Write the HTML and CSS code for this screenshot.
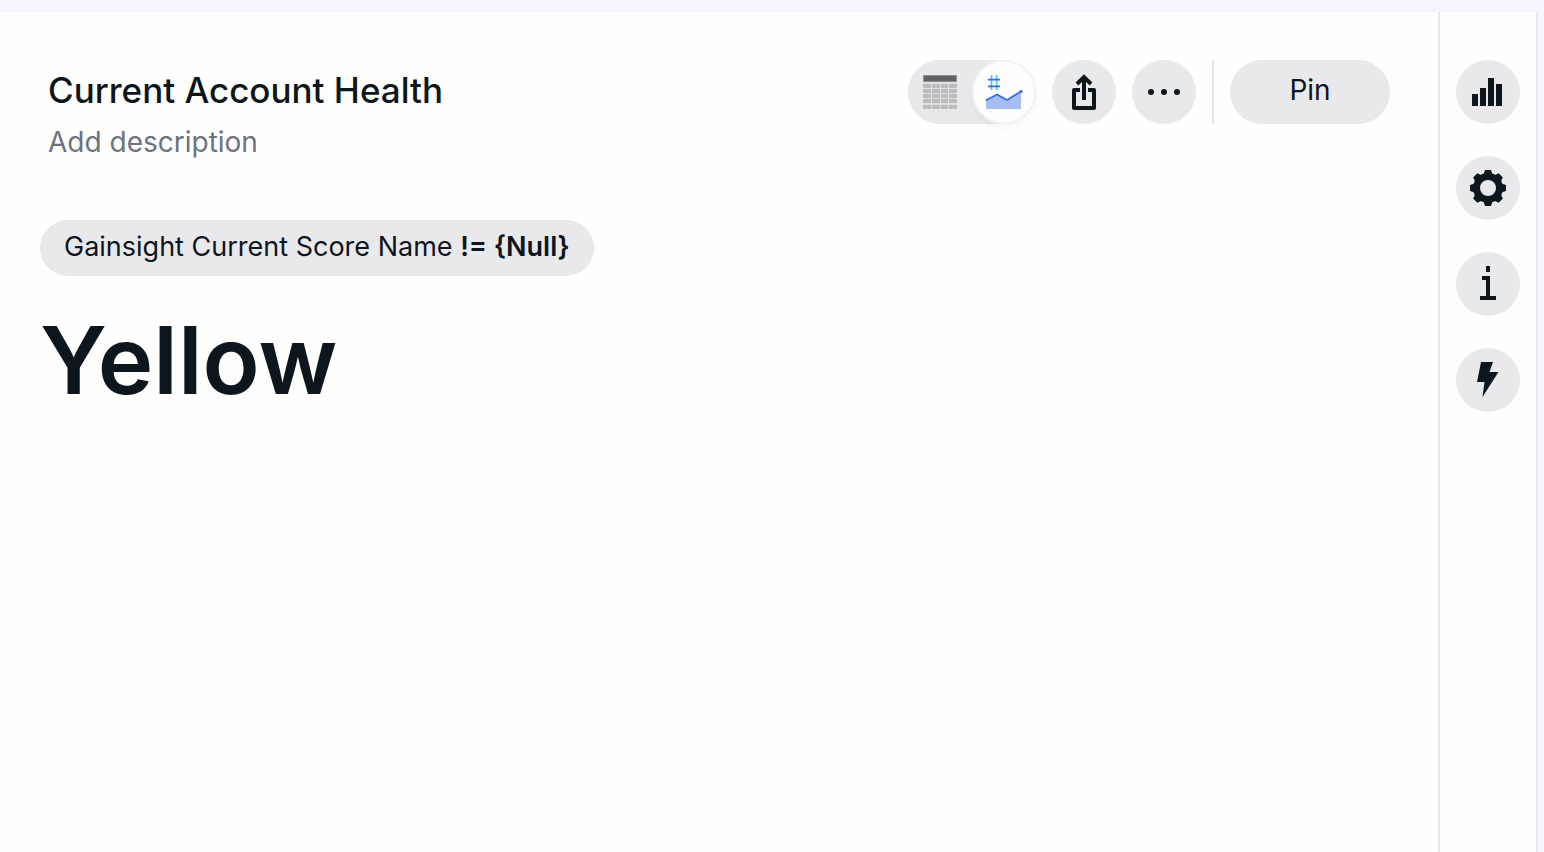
FILE: index.html
```html
<!DOCTYPE html>
<html lang="en">
<head>
<meta charset="utf-8">
<title>Current Account Health</title>
<link rel="stylesheet" href="styles.css">
</head>
<body>
<div class="panel">
  <main class="content">
    <header class="header">
      <div class="heading">
        <h1 class="title">Current Account Health</h1>
        <p class="description">Add description</p>
      </div>
      <div class="toolbar">
        <div class="toggle">
          <button class="toggle-option" type="button" aria-label="Table view">
            <svg class="icon" viewBox="0 0 64 64">
              <path fill="#dedfe1" d="M15 15h34v34H15z"/>
              <path fill="#606267" stroke="#8b8d91" d="M15.500 15.500h33v6h-33z"/>
              <path fill="#bcbdbe" d="M15 24h8v4h-8zM24 24h8v4h-8zM33 24h7v4h-7zM41 24h8v4h-8zM15 29h8v4h-8zM24 29h8v4h-8zM33 29h7v4h-7zM41 29h8v4h-8zM15 34h8v4h-8zM24 34h8v4h-8zM33 34h7v4h-7zM41 34h8v4h-8zM15 39h8v4h-8zM24 39h8v4h-8zM33 39h7v4h-7zM41 39h8v4h-8zM15 45h8v4h-8zM24 45h8v4h-8zM33 45h7v4h-7zM41 45h8v4h-8z"/>
            </svg>
          </button>
          <button class="toggle-option toggle-active" type="button" aria-label="Chart view">
            <svg class="icon" viewBox="0 0 64 64">
              <path fill="none" stroke="#62c5ed" stroke-width="1.800" d="M19.500 15v15M24.700 15v15"/>
              <path fill="none" stroke="#3668e8" stroke-width="1.800" d="M16 19.700h12M16 26.300h12"/>
              <path fill="#a6bdf5" d="M14 40 25 34.500 35 40 49 31.500V49H14z"/>
              <path fill="none" stroke="#3668e8" stroke-width="1.800" stroke-linecap="round" d="M14.500 40 25 34.500 35 40 49 31.500"/>
              <circle cx="49" cy="31.500" r="1.600" fill="#3668e8"/>
            </svg>
          </button>
        </div>
        <button class="round" type="button" aria-label="Share">
          <svg class="icon" viewBox="0 0 64 64" fill="none" stroke="#0d151d" stroke-width="4">
            <path stroke-linejoin="round" d="M28 30h-6v18h20V30h-6"/>
            <path d="M32 40V17M25 24l7-7 7 7"/>
          </svg>
        </button>
        <button class="round" type="button" aria-label="More">
          <svg class="icon" viewBox="0 0 64 64" fill="#0d151d">
            <circle cx="19" cy="32" r="3"/><circle cx="32" cy="32" r="3"/><circle cx="45" cy="32" r="3"/>
          </svg>
        </button>
        <span class="divider"></span>
        <button class="pin" type="button">Pin</button>
      </div>
    </header>
    <button class="filter" type="button">Gainsight Current Score Name <strong>!= {Null}</strong></button>
    <p class="value">Yellow</p>
  </main>
  <aside class="rail">
    <button class="round" type="button" aria-label="Chart">
      <svg class="icon" viewBox="0 0 64 64" fill="#0d151d">
        <path d="M16 34h6v12h-6zM24 28h6v18h-6zM32 18h6v28h-6zM40 24h6v22h-6z"/>
      </svg>
    </button>
    <button class="round" type="button" aria-label="Settings">
      <svg class="icon" viewBox="0 0 64 64">
        <g fill="#0d151d">
          <path id="teeth" d="M27 20l2-6h6l2 6v24l-2 6h-6l-2-6z"/>
          <use href="#teeth" transform="rotate(45 32 32)"/>
          <use href="#teeth" transform="rotate(90 32 32)"/>
          <use href="#teeth" transform="rotate(135 32 32)"/>
          <circle cx="32" cy="32" r="15"/>
        </g>
        <circle cx="32" cy="32" r="8" fill="#e9e9ec"/>
      </svg>
    </button>
    <button class="round" type="button" aria-label="Information">
      <svg class="icon" viewBox="0 0 64 64" fill="#0d151d">
        <path d="M30 14h4v6h-4zM26 24h8v20h6v4H24v-4h6V28h-4z"/>
      </svg>
    </button>
    <button class="round" type="button" aria-label="Actions">
      <svg class="icon" viewBox="0 0 64 64" fill="#0d151d">
        <path d="M25 14h12l-3.500 10h9L26.500 49l2-15H21z"/>
      </svg>
    </button>
  </aside>
</div>
</body>
</html>
```
FILE: styles.css
```css
* {
  box-sizing: border-box;
}

body {
  margin: 0;
  padding: 12px 6px 0 0;
  min-height: 100vh;
  display: flex;
  background: #f6f5fd;
  color: #0d151d;
  font-family: Inter, "Liberation Sans", sans-serif;
}

button {
  border: 0;
  padding: 0;
  color: inherit;
  font: inherit;
  background: #e9e9ec;
  cursor: pointer;
}

.panel {
  flex: 1;
  display: flex;
  background: #fefefd;
  border-right: 2px solid #e5e8ec;
}

.content {
  flex: 1;
  display: flex;
  flex-direction: column;
  align-items: flex-start;
  padding: 48px 48px 48px 40px;
}

.header {
  align-self: stretch;
  display: flex;
  justify-content: space-between;
  align-items: flex-start;
  padding-left: 8px;
}

.heading {
  padding-top: 8px;
}

.title {
  margin: 0;
  font-size: 35px;
  line-height: 44px;
  font-weight: 500;
}

.description {
  margin: 12px 0 0;
  font-size: 28px;
  line-height: 36px;
  color: #6d7280;
}

.toolbar {
  display: flex;
  gap: 16px;
}

.toggle {
  display: flex;
  border-radius: 32px;
  background: #e9e9ec;
}

.toggle-option,
.round {
  width: 64px;
  height: 64px;
  border-radius: 50%;
}

.toggle-active {
  background: #fefefd;
  border: 2px solid #f3f3fa;
  box-shadow: 0 4px 6px rgba(40, 40, 90, 0.04);
}

.toggle-active .icon {
  margin: -2px;
}

.icon {
  display: block;
  width: 64px;
  height: 64px;
}

.divider {
  width: 2px;
  background: #e5e5eb;
}

.pin {
  width: 160px;
  height: 64px;
  padding-bottom: 4px;
  border-radius: 32px;
  font-size: 28px;
}

.filter {
  margin-top: 60px;
  height: 56px;
  padding: 0 24px 4px;
  border-radius: 28px;
  font-size: 27px;
}

.filter strong {
  font-weight: 600;
}

.value {
  margin: 24px 0 0;
  font-size: 94px;
  line-height: 120px;
  font-weight: 600;
}

.rail {
  display: flex;
  flex-direction: column;
  gap: 32px;
  padding: 48px 16px;
  border-left: 2px solid #e5e8ec;
}
```
